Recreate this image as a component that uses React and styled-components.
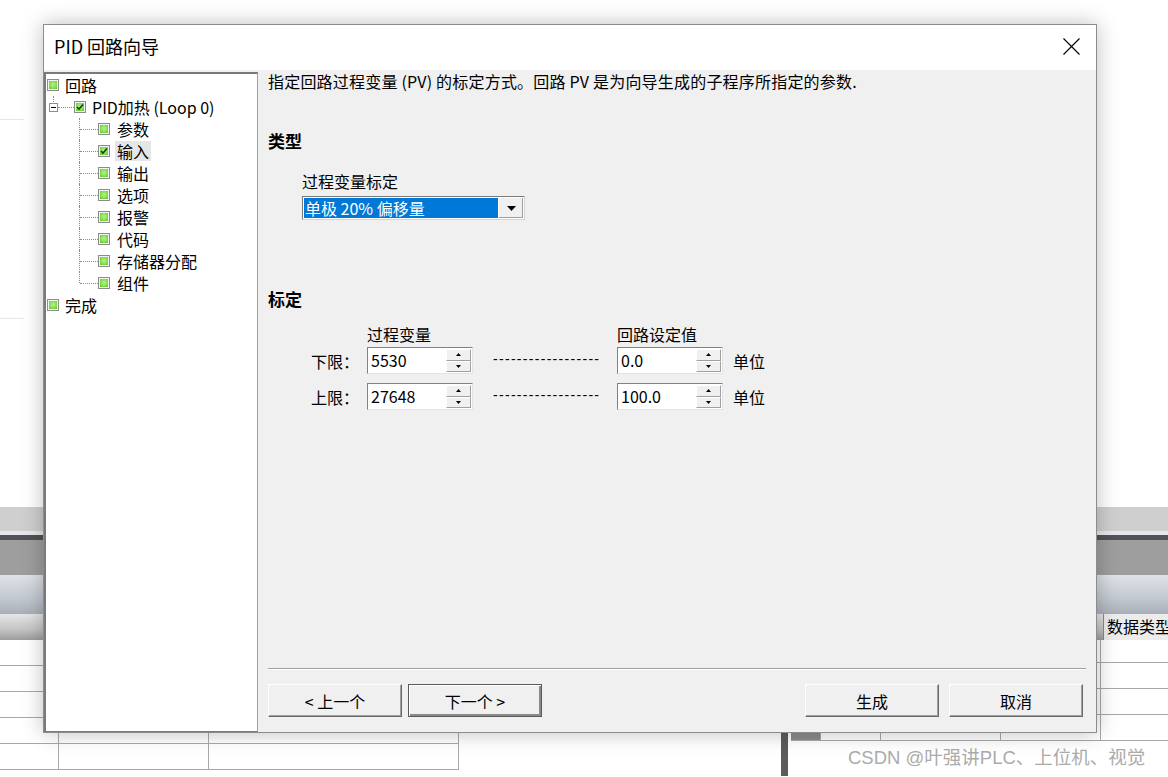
import React from 'react';
import styled, { createGlobalStyle, css } from 'styled-components';

const FONT = `"Noto Sans CJK SC", "Noto Sans", sans-serif`;

const GlobalStyle = createGlobalStyle`
  html, body {
    margin: 0;
    padding: 0;
    background: #fff;
  }
  body {
    font-family: ${FONT};
    color: #000;
    overflow: hidden;
  }
  * { box-sizing: border-box; }
`;

const STEPS = [
  { label: '参数' },
  { label: '输入', checked: true, selected: true },
  { label: '输出' },
  { label: '选项' },
  { label: '报警' },
  { label: '代码' },
  { label: '存储器分配' },
  { label: '组件' },
];

const SCALE_ROWS = [
  { name: '下限：', pv: '5530', sp: '0.0' },
  { name: '上限：', pv: '27648', sp: '100.0' },
];

/* ---------- background application ---------- */

const Screen = styled.div`
  position: relative;
  width: 1168px;
  height: 777px;
  overflow: hidden;
  background: #fff;
`;

const BackTop = styled.div`
  height: 507px;
  padding-top: 119px;
  display: flex;
  flex-direction: column;
  gap: 198px;
`;

const FaintRule = styled.div`
  width: 24px;
  height: 1px;
  background: #e6e6e6;
`;

const Band = styled.div`
  height: ${p => p.$h}px;
  background: ${p => p.$bg};
`;

const HeaderRow = styled.div`
  height: 26px;
  display: flex;
`;

const HeaderFill = styled.div`
  flex: 1;
  background: linear-gradient(#e6e6e6, #c4c4c4 60%, #9c9c9c);
`;

const HeaderCell = styled.div`
  width: 65px;
  border-left: 1px solid #8a8a8a;
  background: #ececec;
  font-size: 16px;
  line-height: 24px;
  padding-left: 3px;
  white-space: nowrap;
  overflow: hidden;
`;

const BackBottom = styled.div`
  height: 136px;
  display: flex;
`;

const LeftTable = styled.div`
  width: 460px;
  display: flex;
  flex-direction: column;
`;

const TableRow = styled.div`
  height: ${p => p.$h || 26}px;
  display: flex;
  border-bottom: 1px solid #a8a8a8;
`;

const TableCell = styled.div`
  width: ${p => p.$w}px;
  border-right: 1px solid #a8a8a8;
  background: ${p => p.$bg || 'transparent'};
  font-size: 15px;
  line-height: 20px;
  padding-left: 4px;
  overflow: hidden;
`;

const RightPane = styled.div`
  margin-left: 322px;
  flex: 1;
  border-left: 7px solid #5c5c5c;
  padding-left: 3px;
  display: flex;
  flex-direction: column;
`;

const Watermark = styled.div`
  position: absolute;
  left: 848px;
  top: 745px;
  font-family: "Liberation Sans", "Noto Sans CJK SC", sans-serif;
  font-size: 18.5px;
  line-height: 26px;
  color: #ababab;
  white-space: nowrap;
`;

/* ---------- dialog window ---------- */

const Dialog = styled.div`
  position: absolute;
  left: 43px;
  top: 24px;
  width: 1054px;
  height: 709px;
  border: 1px solid #8c8c8c;
  background: #f0f0f0;
  box-shadow: 0 0 20px rgba(0, 0, 0, 0.26);
  display: flex;
  flex-direction: column;
`;

const TitleBar = styled.div`
  height: 45px;
  flex-shrink: 0;
  background: #fff;
  display: flex;
  align-items: center;
  justify-content: space-between;
  padding: 0 0 3px 10px;
`;

const Title = styled.div`
  font-size: 18px;
  line-height: 24px;
`;

const CloseButton = styled.div`
  width: 50px;
  height: 40px;
  display: flex;
  align-items: center;
  justify-content: center;
`;

const Body = styled.div`
  flex: 1;
  display: flex;
  min-height: 0;
`;

/* ---------- wizard tree ---------- */

const TreePanel = styled.div`
  width: 214px;
  margin-top: 2px;
  background: #fff;
  border-top: 2px solid #7a7a7a;
  border-left: 2px solid #7a7a7a;
  border-right: 1px solid #a0a0a0;
  border-bottom: 1px solid #7a7a7a;
  font-size: 16px;
`;

const TreeRow = styled.div`
  height: 22px;
  display: flex;
  align-items: center;
  padding-left: ${p => p.$indent}px;
`;

const Expander = styled.div`
  position: relative;
  width: 9px;
  height: 9px;
  border: 1px solid #8e8e8e;
  background: #fff;
  display: flex;
  align-items: center;
  justify-content: center;

  &::before {
    content: '';
    position: absolute;
    left: 3px;
    top: -8px;
    height: 6px;
    border-left: 1px dotted #8a8a8a;
  }
  &::after {
    content: '';
    width: 5px;
    height: 1px;
    background: #000;
  }
`;

const HLink = styled.div`
  width: ${p => p.$w}px;
  border-top: 1px dotted #8a8a8a;
`;

const Branch = styled.div`
  position: relative;
  width: 19px;
  height: 22px;

  &::before {
    content: '';
    position: absolute;
    left: 0;
    top: 0;
    bottom: ${p => (p.$last ? '11px' : '0')};
    border-left: 1px dotted #8a8a8a;
  }
  &::after {
    content: '';
    position: absolute;
    left: 1px;
    right: 0;
    top: 11px;
    border-top: 1px dotted #8a8a8a;
  }
`;

const NodeBox = styled.div`
  width: 12px;
  height: 12px;
  flex-shrink: 0;
  border: 1px solid #8c8c8c;
  padding: 1px;
  background: #f4f4f4;
`;

const NodeFill = styled.div`
  width: 100%;
  height: 100%;
  background: radial-gradient(circle at 50% 45%, #b4f28c 0%, #86e052 55%, #5cc02c 100%);
  display: flex;
  align-items: center;
  justify-content: center;
`;

const NodeLabel = styled.span`
  margin-left: ${p => p.$gap}px;
  padding: 0 2px;
  line-height: 20px;
  white-space: nowrap;
  background: ${p => (p.$selected ? '#e6e6e6' : 'transparent')};
`;

const NodeIcon = ({ checked }) => (
  <NodeBox>
    <NodeFill>
      {checked && (
        <svg width="8" height="8" viewBox="0 0 8 8">
          <path d="M1 4 L3 6 L7 1.5" fill="none" stroke="#1d3d10" strokeWidth="1.6" />
        </svg>
      )}
    </NodeFill>
  </NodeBox>
);

/* ---------- page content ---------- */

const Content = styled.div`
  flex: 1;
  display: flex;
  flex-direction: column;
  padding: 1px 10px 15px 10px;
  font-size: 16px;
`;

const Intro = styled.div`
  line-height: 20px;
  white-space: nowrap;
  letter-spacing: 0.2px;
`;

const SectionTitle = styled.div`
  margin-top: ${p => p.$mt}px;
  font-size: 17px;
  font-weight: 700;
  line-height: 20px;
`;

const FieldLabel = styled.div`
  margin: 20px 0 0 34px;
  line-height: 20px;
`;

const Select = styled.div`
  margin: 5px 0 0 34px;
  width: 223px;
  height: 24px;
  display: flex;
  border: 1px solid #7a7a7a;
  border-right-color: #d4d4d4;
  border-bottom-color: #d4d4d4;
  background: #fff;
  padding: 1px;
`;

const SelectValue = styled.div`
  flex: 1;
  background: #0078d7;
  color: #fff;
  line-height: 20px;
  padding-left: 1px;
  white-space: nowrap;
`;

const SelectArrow = styled.div`
  width: 25px;
  background: #f0f0f0;
  border-left: 1px solid #fff;
  box-shadow: inset -1px -1px 0 #a0a0a0;
  display: flex;
  align-items: center;
  justify-content: center;
`;

const scaleColumns = css`
  display: grid;
  grid-template-columns: 56px 106px 144px 106px auto;
  padding-left: 43px;
`;

const ScaleHead = styled.div`
  ${scaleColumns};
  margin-top: 15px;
  line-height: 20px;
`;

const ScaleRow = styled.div`
  ${scaleColumns};
  height: 27px;
  margin-top: ${p => p.$mt}px;
  align-items: center;
`;

const RowName = styled.div`
  line-height: 20px;
  white-space: nowrap;
`;

const Dashes = styled.div`
  padding-left: 20px;
  font-family: "Liberation Sans", sans-serif;
  font-size: 14px;
  letter-spacing: 1.3px;
  white-space: nowrap;
  line-height: 20px;
  margin-top: -4px;
`;

const Unit = styled.div`
  padding-left: 10px;
  line-height: 20px;
  white-space: nowrap;
`;

const SpinBox = styled.div`
  width: 106px;
  height: 27px;
  display: flex;
  border: 1px solid #828282;
  border-right-color: #e3e3e3;
  border-bottom-color: #e3e3e3;
  background: #fff;
  padding: 1px;
`;

const SpinValue = styled.div`
  flex: 1;
  padding-left: 2px;
  line-height: 22px;
`;

const SpinButtons = styled.div`
  width: 25px;
  display: flex;
  flex-direction: column;
`;

const SpinButton = styled.div`
  flex: 1;
  background: #f0f0f0;
  border: 1px solid #fff;
  border-right-color: #a0a0a0;
  border-bottom-color: #a0a0a0;
  display: flex;
  align-items: center;
  justify-content: center;
`;

const Arrow = ({ up, w = 5, h = 3 }) => (
  <svg width={w} height={h} viewBox={`0 0 ${w} ${h}`}>
    <polygon points={up ? `0,${h} ${w / 2},0 ${w},${h}` : `0,0 ${w},0 ${w / 2},${h}`} fill="#000" />
  </svg>
);

const Spin = ({ value }) => (
  <SpinBox>
    <SpinValue>{value}</SpinValue>
    <SpinButtons>
      <SpinButton><Arrow up /></SpinButton>
      <SpinButton><Arrow /></SpinButton>
    </SpinButtons>
  </SpinBox>
);

const Grow = styled.div`
  flex: 1;
`;

const Separator = styled.div`
  height: 2px;
  border-top: 1px solid #a0a0a0;
  border-bottom: 1px solid #fff;
`;

const ButtonBar = styled.div`
  margin: 14px 3px 0 0;
  display: flex;
  align-items: center;
`;

const ButtonGroup = styled.div`
  display: flex;
  gap: ${p => p.$gap}px;
  margin-left: ${p => (p.$end ? 'auto' : '0')};
`;

const Button = styled.div`
  width: 134px;
  height: 33px;
  display: flex;
  align-items: center;
  justify-content: center;
  background: #f0f0f0;
  font-size: 16px;
  border: 1px solid #fff;
  border-right-color: #696969;
  border-bottom-color: #696969;
  box-shadow: inset -1px -1px 0 #a0a0a0;
  white-space: nowrap;

  ${p => p.$default && css`
    border: 1px solid #5a5a5a;
    box-shadow: inset 1px 1px 0 #fff, inset -2px -2px 0 #8a8a8a;
  `}
`;

const RIGHT_ROWS = [23, 26, 26, 26];

const App = () => (
  <>
    <GlobalStyle />
    <Screen>
      <BackTop>
        <FaintRule />
        <FaintRule />
      </BackTop>
      <Band $h={24} $bg="#cfcfcf" />
      <Band $h={4} $bg="#e6e6ee" />
      <Band $h={5} $bg="#525252" />
      <Band $h={35} $bg="#9e9e9e" />
      <Band $h={39} $bg="linear-gradient(#dfe2e7, #c3c8cf 60%, #a9afb8)" />
      <HeaderRow>
        <HeaderFill />
        <HeaderCell>数据类型</HeaderCell>
      </HeaderRow>
      <BackBottom>
        <LeftTable>
          {[0, 1, 2, 3, 4].map(i => (
            <TableRow key={i}>
              <TableCell $w={59} />
              <TableCell $w={150} />
              <TableCell $w={250} />
            </TableRow>
          ))}
        </LeftTable>
        <RightPane>
          {RIGHT_ROWS.map((h, i) => {
            const last = i === RIGHT_ROWS.length - 1;
            return (
              <TableRow key={i} $h={h}>
                <TableCell $w={30} $bg="#8c8c8c">{last ? '4' : ''}</TableCell>
                <TableCell $w={60} />
                <TableCell $w={120} />
                <TableCell $w={100}>{last ? 'TEMP' : ''}</TableCell>
                <TableCell $w={80} />
              </TableRow>
            );
          })}
        </RightPane>
      </BackBottom>

      <Watermark>CSDN @叶强讲PLC、上位机、视觉</Watermark>

      <Dialog>
        <TitleBar>
          <Title>PID 回路向导</Title>
          <CloseButton>
            <svg width="17" height="17" viewBox="0 0 17 17">
              <path d="M0.5 0.5 L16.5 16.5 M16.5 0.5 L0.5 16.5" stroke="#000" strokeWidth="1.1" />
            </svg>
          </CloseButton>
        </TitleBar>

        <Body>
          <TreePanel>
            <TreeRow $indent={1}>
              <NodeIcon />
              <NodeLabel $gap={4}>回路</NodeLabel>
            </TreeRow>
            <TreeRow $indent={3}>
              <Expander />
              <HLink $w={16} />
              <NodeIcon checked />
              <NodeLabel $gap={4}>PID加热 (Loop 0)</NodeLabel>
            </TreeRow>
            {STEPS.map((s, i) => (
              <TreeRow key={s.label} $indent={33}>
                <Branch $last={i === STEPS.length - 1} />
                <NodeIcon checked={s.checked} />
                <NodeLabel $gap={5} $selected={s.selected}>{s.label}</NodeLabel>
              </TreeRow>
            ))}
            <TreeRow $indent={1}>
              <NodeIcon />
              <NodeLabel $gap={4}>完成</NodeLabel>
            </TreeRow>
          </TreePanel>

          <Content>
            <Intro>指定回路过程变量 (PV) 的标定方式。回路 PV 是为向导生成的子程序所指定的参数.</Intro>

            <SectionTitle $mt={40}>类型</SectionTitle>
            <FieldLabel>过程变量标定</FieldLabel>
            <Select>
              <SelectValue>单极 20% 偏移量</SelectValue>
              <SelectArrow><Arrow w={9} h={5} /></SelectArrow>
            </Select>

            <SectionTitle $mt={69}>标定</SectionTitle>
            <ScaleHead>
              <span />
              <span>过程变量</span>
              <span />
              <span>回路设定值</span>
            </ScaleHead>
            {SCALE_ROWS.map((r, i) => (
              <ScaleRow key={r.name} $mt={i === 0 ? 3 : 9}>
                <RowName>{r.name}</RowName>
                <Spin value={r.pv} />
                <Dashes>------------------</Dashes>
                <Spin value={r.sp} />
                <Unit>单位</Unit>
              </ScaleRow>
            ))}

            <Grow />
            <Separator />
            <ButtonBar>
              <ButtonGroup $gap={6}>
                <Button>&lt; 上一个</Button>
                <Button $default>下一个 &gt;</Button>
              </ButtonGroup>
              <ButtonGroup $gap={10} $end>
                <Button>生成</Button>
                <Button>取消</Button>
              </ButtonGroup>
            </ButtonBar>
          </Content>
        </Body>
      </Dialog>
    </Screen>
  </>
);

export default App;
